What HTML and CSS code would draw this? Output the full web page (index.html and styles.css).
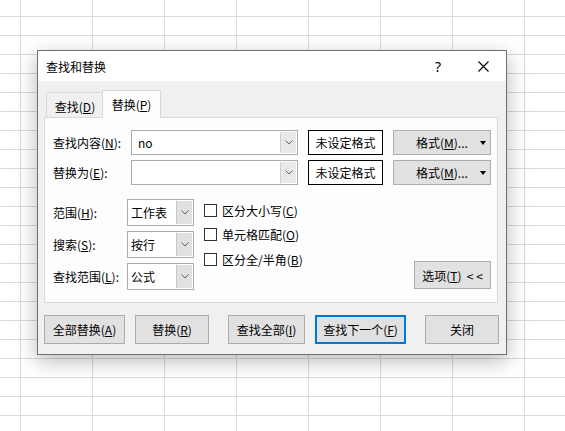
FILE: index.html
```html
<!DOCTYPE html>
<html lang="zh-CN">
<head>
<meta charset="utf-8">
<title>查找和替换</title>
<link rel="stylesheet" href="styles.css">
</head>
<body>
<div class="dialog">
  <div class="titlebar">
    <span class="title">查找和替换</span>
    <span class="tb-btn help">?</span>
    <span class="tb-btn close"><svg width="11" height="11" viewBox="0 0 11 11"><path d="M0.5 0.5 L10.5 10.5 M10.5 0.5 L0.5 10.5" stroke="#000" stroke-width="1.1" fill="none"/></svg></span>
  </div>
  <div class="body">
    <div class="tabs">
      <div class="tab">查找(<u>D</u>)</div>
      <div class="tab active">替换(<u>P</u>)</div>
    </div>
    <div class="panel">
      <div class="row">
        <span class="label">查找内容(<u>N</u>):</span>
        <div class="combo"><span class="combo-text">no</span><span class="combo-arrow"><svg width="8" height="5" viewBox="0 0 8 5"><polyline points="0.5,0.5 4,4 7.5,0.5" fill="none" stroke="#606060" stroke-width="1"/></svg></span></div>
        <div class="fmt-box">未设定格式</div>
        <div class="fmt-btn"><span>格式(<u>M</u>)...</span><span class="tri"></span></div>
      </div>
      <div class="row">
        <span class="label">替换为(<u>E</u>):</span>
        <div class="combo"><span class="combo-text"></span><span class="combo-arrow"><svg width="8" height="5" viewBox="0 0 8 5"><polyline points="0.5,0.5 4,4 7.5,0.5" fill="none" stroke="#606060" stroke-width="1"/></svg></span></div>
        <div class="fmt-box">未设定格式</div>
        <div class="fmt-btn"><span>格式(<u>M</u>)...</span><span class="tri"></span></div>
      </div>
      <div class="lower">
        <div class="selects">
          <div class="sel-row">
            <span class="sel-label">范围(<u>H</u>):</span>
            <div class="select"><span class="select-text">工作表</span><span class="select-arrow"><svg width="8" height="5" viewBox="0 0 8 5"><polyline points="0.5,0.5 4,4 7.5,0.5" fill="none" stroke="#606060" stroke-width="1"/></svg></span></div>
          </div>
          <div class="sel-row">
            <span class="sel-label">搜索(<u>S</u>):</span>
            <div class="select"><span class="select-text">按行</span><span class="select-arrow"><svg width="8" height="5" viewBox="0 0 8 5"><polyline points="0.5,0.5 4,4 7.5,0.5" fill="none" stroke="#606060" stroke-width="1"/></svg></span></div>
          </div>
          <div class="sel-row">
            <span class="sel-label">查找范围(<u>L</u>):</span>
            <div class="select"><span class="select-text">公式</span><span class="select-arrow"><svg width="8" height="5" viewBox="0 0 8 5"><polyline points="0.5,0.5 4,4 7.5,0.5" fill="none" stroke="#606060" stroke-width="1"/></svg></span></div>
          </div>
        </div>
        <div class="checks">
          <div class="check-row"><span class="box"></span><span>区分大小写(<u>C</u>)</span></div>
          <div class="check-row"><span class="box"></span><span>单元格匹配(<u>O</u>)</span></div>
          <div class="check-row"><span class="box"></span><span>区分全/半角(<u>B</u>)</span></div>
        </div>
        <div class="opt-btn">选项(<u>T</u>)&nbsp;&nbsp;&lt; &lt;</div>
      </div>
    </div>
    <div class="buttons">
      <div class="btn w81">全部替换(<u>A</u>)</div>
      <div class="btn w74 gap-sm">替换(<u>R</u>)</div>
      <div class="btn w77 gap-lg">查找全部(<u>I</u>)</div>
      <div class="btn w91 gap-sm focused">查找下一个(<u>F</u>)</div>
      <div class="btn w74 gap-lg">关闭</div>
    </div>
  </div>
</div>
</body>
</html>
```
FILE: styles.css
```css
* { box-sizing: border-box; }
html, body { margin: 0; }
body {
  width: 565px;
  height: 431px;
  overflow: hidden;
  padding: 50px 0 0 37px;
  background-color: #ffffff;
  background-image:
    linear-gradient(to right, #dadada 1px, transparent 1px),
    linear-gradient(to bottom, #dadada 1px, transparent 1px);
  background-size: 72px 19px;
  background-position: 20px 16px;
  font-family: "Noto Sans CJK SC", "Noto Sans", sans-serif;
  font-size: 12px;
  color: #000;
}
u { text-underline-offset: 1px; text-decoration-thickness: 1px; }

.dialog {
  width: 470px;
  height: 305px;
  border: 1px solid #6e6e6e;
  background: #f0f0f0;
  box-shadow: 0 6px 20px rgba(0, 0, 0, 0.28);
  display: flex;
  flex-direction: column;
}
.titlebar {
  height: 30px;
  background: #fff;
  display: flex;
  align-items: center;
  padding-left: 8px;
}
.title { flex: 1; font-size: 12px; }
.tb-btn {
  width: 46px;
  height: 30px;
  display: flex;
  align-items: center;
  justify-content: center;
}
.help { font-family: "Noto Sans", sans-serif; font-size: 14px; padding-left: 2px; }

.body { flex: 1; padding: 9px 0 0 6px; }

.tabs { display: flex; height: 27px; padding-left: 2px; }
.tab {
  width: 58px;
  height: 25px;
  margin-top: 2px;
  border: 1px solid #d9d9d9;
  border-bottom: none;
  display: flex;
  align-items: center;
  justify-content: center;
  padding-top: 2px;
}
.tab.active {
  width: 59px;
  height: 28px;
  margin-top: 0;
  margin-left: -2px;
  padding-top: 0;
  background: #fdfdfd;
  position: relative;
  z-index: 1;
}

.panel {
  width: 454px;
  height: 186px;
  border: 1px solid #d9d9d9;
  background: #fdfdfd;
  padding: 12px 6px 0 8px;
}
.row { display: flex; align-items: center; height: 25px; }
.row + .row { margin-top: 5px; }
.label { width: 78px; }
.combo {
  width: 167px;
  height: 25px;
  border: 1px solid #ababab;
  background: #fff;
  display: flex;
}
.combo-text { flex: 1; padding-left: 6px; display: flex; align-items: center; }
.combo-arrow {
  width: 16px;
  margin: 1px 1px 1px 0;
  background: #e9e9e9;
  border-left: 1px solid #d0d0d0;
  display: flex;
  align-items: center;
  justify-content: center;
}
.fmt-box {
  width: 75px;
  height: 25px;
  margin-left: 10px;
  border: 1px solid #000;
  background: #fff;
  display: flex;
  align-items: center;
  justify-content: center;
}
.fmt-btn {
  width: 98px;
  height: 25px;
  margin-left: 10px;
  border: 1px solid #adadad;
  background: #e1e1e1;
  display: flex;
  align-items: center;
  justify-content: space-between;
  padding: 0 4px 0 22px;
}
.tri {
  width: 0;
  height: 0;
  border-left: 3.5px solid transparent;
  border-right: 3.5px solid transparent;
  border-top: 4px solid #000;
}

.lower { display: flex; margin-top: 14px; height: 91px; }
.selects { display: flex; flex-direction: column; gap: 5px; }
.sel-row { display: flex; align-items: center; height: 27px; }
.sel-label { width: 74px; }
.select {
  width: 67px;
  height: 27px;
  border: 1px solid #ababab;
  background: #fff;
  display: flex;
}
.select-text { flex: 1; padding-left: 3px; display: flex; align-items: center; }
.select-arrow {
  width: 16px;
  margin: 1px 1px 1px 0;
  background: #e1e1e1;
  border-left: 1px solid #c8c8c8;
  display: flex;
  align-items: center;
  justify-content: center;
}
.checks { margin-left: 10px; margin-top: -1px; display: flex; flex-direction: column; }
.check-row { display: flex; align-items: center; height: 24.6px; }
.box {
  width: 13px;
  height: 13px;
  border: 1px solid #333;
  background: #fff;
  margin-right: 5px;
}
.opt-btn {
  margin-left: auto;
  align-self: flex-end;
  margin-bottom: 1px;
  width: 77px;
  height: 28px;
  border: 1px solid #adadad;
  background: #e1e1e1;
  display: flex;
  align-items: center;
  justify-content: center;
}

.buttons { display: flex; margin-top: 12px; }
.btn {
  height: 29px;
  border: 1px solid #adadad;
  background: #e1e1e1;
  display: flex;
  align-items: center;
  justify-content: center;
}
.btn.focused { border: 2px solid #0078d7; }
.w74 { width: 74px; }
.w77 { width: 77px; }
.w81 { width: 81px; }
.w91 { width: 91px; }
.gap-sm { margin-left: 10px; }
.gap-lg { margin-left: 19px; }
```
